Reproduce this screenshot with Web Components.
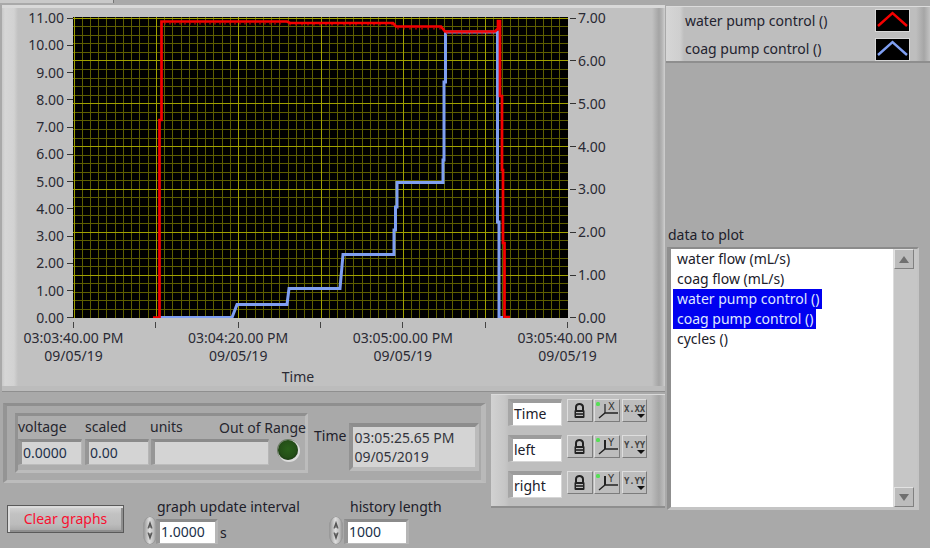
<!doctype html>
<html><head><meta charset="utf-8"><style>
html,body{margin:0;padding:0;background:#a9a9a9}
body{font:14px/18px "Noto Sans","Open Sans",sans-serif;color:#20202a}
</style></head><body>
<lv-app></lv-app>
<script>
const FONT='"Noto Sans","Open Sans",sans-serif';
function def(name,css,html,init){
  customElements.define(name,class extends HTMLElement{
    constructor(){super();const s=this.attachShadow({mode:'open'});s.innerHTML='<style>'+css+'</style>'+html;if(init)init(s,this);}
  });
}
/* recessed value box */
def('lv-field',`
:host{display:block;box-sizing:border-box;border-style:solid;border-width:3px 3px 1px 4px;border-color:#8b8b8b #b6b6b6 #bcbcbc #969696;background:var(--face,#d4d4d4);padding:0 0 0 var(--pad,1px);font-size:14px;line-height:var(--lh,20px);color:var(--ink,#22304a);white-space:pre;overflow:hidden}
`,`<slot></slot>`);
/* spinner */
def('lv-spin',`
:host{display:block;flex:none;width:14px;height:29px;border-radius:7px/11px;background:linear-gradient(90deg,#8f8f8f,#dedede 45%,#bdbdbd 75%,#8a8a8a);box-shadow:inset 0 0 0 1px #9a9a9a}
svg{display:block}
`,`<svg width="14" height="29" viewBox="0 0 14 29"><path d="M5 12.5 7 6.5 9 12.5M7 7V12" fill="none" stroke="#555" stroke-width="1.1"/><path d="M5 16.5 7 22.5 9 16.5M7 17V22" fill="none" stroke="#555" stroke-width="1.1"/></svg>`);
/* numeric control */
def('lv-numeric',`
:host{display:block;flex:none;width:var(--w)}
.l{padding-left:var(--lp);height:18px;white-space:nowrap}
.r{display:flex;align-items:flex-start}
lv-field{--face:#fff;--lh:19px;--ink:#20304a;margin:3px 0 0 var(--fg);width:var(--fw);height:25px;--pad:1px;flex:none}
.u{margin:8px 0 0 2px}
`,`<div class="l"><slot name="label"></slot></div><div class="r"><lv-spin></lv-spin><lv-field><slot name="value"></slot></lv-field><div class="u"><slot name="unit"></slot></div></div>`);
/* chart */
def('lv-chart',`
:host{display:grid;grid-template-columns:71px 495px 40px;grid-template-rows:301px 5px 44px auto;font-size:14px;line-height:18px;color:#2a2a34}
.ax{display:flex;flex-direction:column;justify-content:space-between;padding-top:1px;box-sizing:border-box;height:301px}
.ax div{height:0;display:flex;align-items:center;white-space:nowrap}
.ax.l div{justify-content:flex-end}
.ax.l div::after{content:"";width:6px;height:1px;background:#333;margin:0 0 0 3px;flex:none}
.ax.r div::before{content:"";width:6px;height:1px;background:#333;margin:0 2px 0 2px;flex:none}
svg{display:block;width:495px;height:301px;background:#000}
.ticks{grid-column:2;display:flex;justify-content:space-between;padding:4px 0 0;height:5px;box-sizing:content-box}
.ticks i{width:1px;height:6px;background:#444}
.xl{grid-column:2;display:flex;justify-content:space-between;padding-top:6px}
.xl div{width:1px;display:flex;justify-content:center;text-align:center;white-space:nowrap}
.t{grid-column:2;text-align:center;margin-top:1px;width:450px}
`,`<div class="ax l"></div><svg viewBox="73 17 495 301" shape-rendering="crispEdges"></svg><div class="ax r"></div>
<div class="ticks"></div><div class="xl"></div><div class="t">Time</div>`,(s)=>{
  const L=s.querySelector('.ax.l'),R=s.querySelector('.ax.r');
  for(let i=11;i>=0;i--)L.insertAdjacentHTML('beforeend',`<div>${i}.00</div>`);
  for(let i=7;i>=0;i--)R.insertAdjacentHTML('beforeend',`<div>${i}.00</div>`);
  const T=s.querySelector('.ticks');for(let i=0;i<7;i++)T.insertAdjacentHTML('beforeend','<i></i>');
  const X=s.querySelector('.xl');
  for(const t of ['03:03:40.00 PM','03:04:20.00 PM','03:05:00.00 PM','03:05:40.00 PM'])X.insertAdjacentHTML('beforeend',`<div><span>${t}<br>09/05/19</span></div>`);
  let g='';const x0=73.5,dx=82.35,y0=17.5,dy=300/7;
  for(let i=0;i<=60;i++){const x=Math.round(x0+i*dx/10)+.5;if(i%10)g+=`<path d="M${x} 17V318" stroke="#5e5e00"/>`;}
  for(let i=0;i<=35;i++){const y=Math.round(y0+i*dy/5)+.5;if(i%5)g+=`<path d="M73 ${y}H568" stroke="#5e5e00"/>`;}
  for(let i=0;i<=6;i++){const x=Math.round(x0+i*dx)+.5;g+=`<path d="M${x} 17V318" stroke="#a0a000"/>`;}
  for(let i=0;i<=7;i++){const y=Math.round(y0+i*dy)+.5;g+=`<path d="M73 ${y}H568" stroke="#a0a000"/>`;}
  const blue='M160 317.5H232L237 304.5H287L289 288.5H340L343 254.5H394V230L395.5 230V207L397 207V182.5H443V160H444V82H445.5V32H497.5V222H499V317.5H503';
  let jag='';for(let x=165;x<285;x+=5)jag+=`M${x} 23v1.5`;for(let x=290;x<395;x+=6)jag+=`M${x} 24v1.5`;for(let x=398;x<443;x+=6)jag+=`M${x} 28v1.5`;for(let x=447;x<495;x+=5)jag+=`M${x} 33v1.2`;
  const red='M153 317.5H159.5V120H161.5V21.5H287L290 23H393L396 26.5H441L445 31.5H495L498 28.5V21H500V96H502V170H503V243H504.5V317H510';
  g+=`<g shape-rendering="auto"><path d="${blue}" fill="none" stroke="#7f9ff2" stroke-width="3"/><path d="${red}" fill="none" stroke="#f50000" stroke-width="2.7"/><path d="${jag}" fill="none" stroke="#e00000" stroke-width="1.2"/></g>`;
  s.querySelector('svg').innerHTML=g;
});
/* raised graph panel */
def('lv-graph-panel',`
:host{display:block;box-sizing:border-box;height:387px;width:663px;margin:2px 0 0 2px;padding:12px 0 0 0;
background:linear-gradient(90deg,#c9c9c9 0,#d6d6d6 3px,#d2d2d2 12px,#c1c1c1 16px,#c1c1c1 650px,#a4a4a4 657px,#b4b4b4 660px,#d0d0d0 663px);
box-shadow:inset 0 3px 0 #d9d9d9,inset 0 -1px 0 #8f8f8f,inset 0 -6px 0 #bcbcbc}
`,`<slot></slot>`);
/* legend */
def('lv-legend',`
:host{display:block;box-sizing:border-box;margin:6px 0 0 1px;height:57px;width:264px;padding:3px 20px 0 19px;
background:linear-gradient(90deg,#d6d6d6,#cfcfcf 14px,#bebebe 18px,#bebebe 250px,#a6a6a6 258px,#c2c2c2 264px);box-shadow:inset 0 1px 0 #dcdcdc,inset 0 -2px 0 #8e8e8e}
.r{display:flex;justify-content:space-between;align-items:center;height:23px;margin-bottom:6px;color:#23232f}
.r+.r span{margin-top:-2px}
.s{width:35px;height:23px;background:#000;box-sizing:border-box;border:1px solid #d8d8d8}
svg{display:block}
`,`<div class="r"><span>water pump control ()</span><div class="s"><svg width="33" height="21" viewBox="0 0 33 21"><path d="M2 16 16.5 3 31 16" fill="none" stroke="#f50000" stroke-width="2.4"/></svg></div></div>
<div class="r"><span>coag pump control ()</span><div class="s"><svg width="33" height="21" viewBox="0 0 33 21"><path d="M2 16 16.5 3 31 16" fill="none" stroke="#7f9ff2" stroke-width="2.4"/></svg></div></div>`);
/* list box */
def('lv-list',`
:host{display:flex;box-sizing:border-box;margin:3px 0 0 2px;width:252px;height:263px;border-style:solid;border-width:2px 2px 3px 4px;border-color:#8b8b8b #c4c4c4 #c4c4c4 #8f8f8f;background:#fff}
ul{list-style:none;margin:0;padding:0 0 0 2px;flex:1;color:#20202a}
li{height:20px;line-height:20px;padding-left:4px;width:max-content;padding-right:3px;white-space:nowrap}
li.sel{background:#0000f0;color:#dfe6ff}
.bar{width:24px;flex:none;display:flex;flex-direction:column;background:#c6c6c6;border-left:1px solid #dcdcdc;box-sizing:border-box}
.b{height:20px;width:20px;background:#bcbcbc;box-sizing:border-box;border:1px solid;border-color:#e2e2e2 #808080 #808080 #e2e2e2;display:flex;align-items:center;justify-content:center}
.sp{flex:1}
i{display:block;width:0;height:0;border-left:5px solid transparent;border-right:5px solid transparent}
i.u{border-bottom:7px solid #6f6f6f} i.d{border-top:7px solid #6f6f6f}
`,`<ul><li>water flow (mL/s)</li><li>coag flow (mL/s)</li><li class="sel">water pump control ()</li><li class="sel">coag pump control ()</li><li>cycles ()</li></ul>
<div class="bar"><div class="b"><i class="u"></i></div><div class="sp"></div><div class="b"><i class="d"></i></div></div>`);
/* small cursor-palette button */
def('lv-tool',`
:host{display:block;box-sizing:border-box;flex:none;width:var(--w,26px);height:23px;background:#bdbdbd;border:1px solid;border-color:#dedede #7c7c7c #7c7c7c #dedede}
svg{display:block}
`,`<slot></slot>`);
const lock=`<svg width="24" height="21" viewBox="0 0 24 21"><path d="M8 10V7a3.5 3 0 0 1 7 0V10" fill="none" stroke="#222" stroke-width="2"/><rect x="6.5" y="10" width="10" height="8" rx="1" fill="#222"/><rect x="8" y="12" width="7" height="1.2" fill="#bbb"/><rect x="8" y="14.8" width="7" height="1.2" fill="#bbb"/></svg>`;
const axis=c=>`<svg width="24" height="21" viewBox="0 0 24 21"><rect x="1" y="2" width="4" height="4" rx="1.5" fill="#55e055"/><path d="M4 18 10 13H23" fill="none" stroke="#222" stroke-width="1.4"/><path d="M10 13V4" fill="none" stroke="#222" stroke-width="${c=='X'?1.2:2}"/><text x="13" y="10" style="font:10px 'DejaVu Sans',sans-serif" fill="#333">${c}</text></svg>`;
const fmt=c=>`<svg width="24" height="21" viewBox="0 0 24 21"><text x="1" y="12" style="font:bold 9px 'DejaVu Sans Mono',monospace;letter-spacing:-.15px" fill="#444">${c}.${c}${c}</text><path d="M14 14H22L18 18Z" fill="#111"/></svg>`;
/* a row in the cursor palette */
def('lv-cursor-row',`
:host{display:flex;height:36px}
lv-field{--face:#fff;--ink:#20202a;--lh:22px;--pad:1px;width:54px;height:27px;flex:none;border-width:4px 1px 1px 5px;border-color:#9c9c9c #d6d6d6 #d6d6d6 #a6a6a6}
.tools{display:flex;margin:0 0 0 5px}
lv-tool+lv-tool{margin-left:1px}
lv-tool.c{margin-left:2px}
`,`<lv-field><slot name="name"></slot></lv-field><div class="tools"><lv-tool class="a"></lv-tool><lv-tool class="b"></lv-tool><lv-tool class="c" style="--w:25px"></lv-tool></div>`,(s,h)=>{
  const a=h.getAttribute('axis')||'X';
  const t=s.querySelectorAll('lv-tool');
  t[0].shadowRoot.innerHTML+=lock;t[1].shadowRoot.innerHTML+=axis(a);t[2].shadowRoot.innerHTML+=fmt(a);
});
def('lv-palette',`
:host{display:block;box-sizing:border-box;flex:none;width:174px;height:114px;margin-top:2px;padding:5px 0 0 17px;background:linear-gradient(90deg,#d2d2d2,#c6c6c6 14px,#bebebe 18px,#bebebe 160px,#a5a5a5 168px,#c0c0c0 174px);box-shadow:inset 0 1px 0 #dadada,inset 0 -2px 0 #8e8e8e}
`,`<slot></slot>`);
/* status cluster */
def('lv-status',`
:host{display:flex;box-sizing:border-box;width:483px;height:80px;border-style:solid;border-width:3px 5px 3px 4px;border-color:#8f8f8f #b9b9b9 #bcbcbc #949494;background:#a9a9a9;padding:7px 0 0 8px}
.in{box-sizing:border-box;flex:none;width:293px;height:60px;border-style:solid;border-width:3px;border-color:#8f8f8f #bcbcbc #bcbcbc #929292;background:#adadad;padding:2px 0 0 0}
.hd{display:grid;grid-template-columns:67px 65px 69px auto;height:18px;white-space:nowrap;color:#26262e}
.rw{display:flex;margin-top:3px;align-items:flex-start}
lv-field{height:26px;flex:none;border-width:3px 1px 1px 4px;--lh:22px}
.led{flex:none;width:20px;height:20px;border-radius:50%;margin:1px 0 0 9px;background:radial-gradient(circle at 50% 45%,#2a601a 0,#244f17 55%,#183510 80%);box-shadow:1px 1px 0 1px #dcdcdc,0 0 0 1px #6c7c64}
.tm{margin:14px 0 0 6px;color:#20202a}
.box{box-sizing:border-box;flex:none;width:130px;height:48px;margin:10px 0 0 3px;border-style:solid;border-width:4px;border-color:#8d8d8d #bbb #bbb #929292;background:#d4d4d4;padding:1px 0 0 1px;color:#33343c;line-height:19px;white-space:pre}
`,`<div class="in"><div class="hd"><span>voltage</span><span>scaled</span><span>units</span><span style="margin-top:1px">Out of Range</span></div>
<div class="rw"><lv-field style="width:64px;margin-right:3px">0.0000</lv-field><lv-field style="width:64px;margin-right:2px">0.00</lv-field><lv-field style="width:118px"></lv-field><div class="led"></div></div></div>
<div class="tm">Time</div><div class="box">03:05:25.65 PM
09/05/2019</div>`);
/* button */
def('lv-btn',`
:host{display:block;box-sizing:border-box;flex:none;width:117px;height:28px;margin-top:7px;border:1px solid #5a5a5a;background:linear-gradient(180deg,#d6d6d6,#c2c2c2 30%,#bcbcbc 70%,#a6a6a6);box-shadow:inset 2px 2px 0 #dcdcdc,inset -2px -2px 0 #8e8e8e;color:#f81030;text-align:center;line-height:26px}
`,`<slot></slot>`);
/* root */
def('lv-app',`
:host{display:grid;grid-template-columns:665px 265px;width:930px;height:548px;overflow:hidden;background:#a9a9a9;font:14px/18px ${FONT};color:#20202a}
.strip{height:3px;width:113px;background:#c9c9c9;border-right:1px solid #777;box-sizing:content-box}
.lo{display:flex}
.st{flex:none;width:491px;padding:11px 0 0 3px;box-sizing:border-box}
.ctl{display:flex;padding:15px 0 0 4px}
lv-btn{margin-right:19px}
.dl{margin:163px 0 0 3px;height:18px}
`,`<div class="left"><div class="strip"></div>
<lv-graph-panel><lv-chart></lv-chart></lv-graph-panel>
<div class="lo"><div class="st"><lv-status></lv-status>
<div class="ctl"><lv-btn>Clear graphs</lv-btn>
<lv-numeric style="--w:186px;--lp:14px;--fg:-1px;--fw:62px"><span slot="label">graph update interval</span><span slot="value">1.0000</span><span slot="unit">s</span></lv-numeric>
<lv-numeric style="--w:130px;--lp:21px;--fg:1px;--fw:65px"><span slot="label">history length</span><span slot="value">1000</span></lv-numeric>
</div></div>
<lv-palette><lv-cursor-row axis="X"><span slot="name">Time</span></lv-cursor-row><lv-cursor-row axis="Y"><span slot="name">left</span></lv-cursor-row><lv-cursor-row axis="Y"><span slot="name">right</span></lv-cursor-row></lv-palette>
</div></div>
<div class="right"><lv-legend></lv-legend><div class="dl">data to plot</div><lv-list></lv-list></div>`);
</script>
</body></html>
